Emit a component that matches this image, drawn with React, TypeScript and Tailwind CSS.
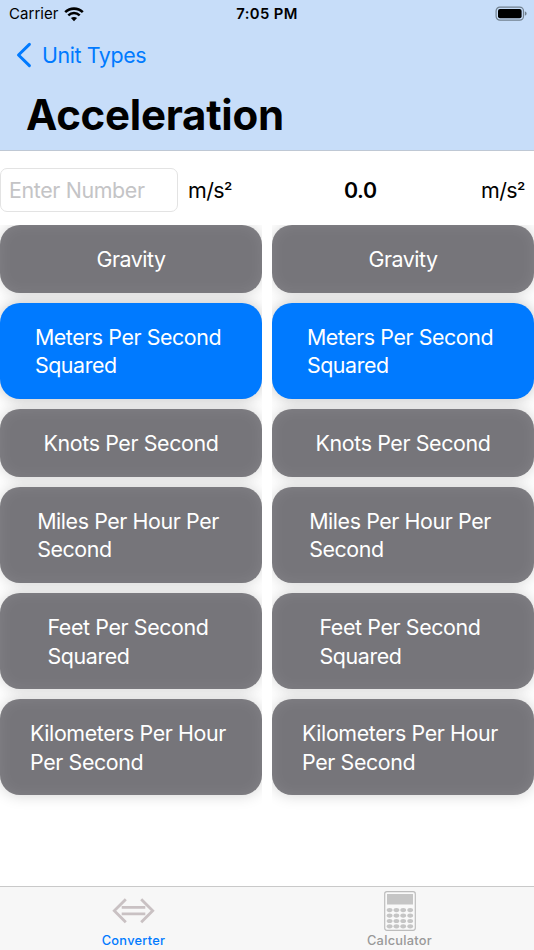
type Unit = { lines: string[]; selected?: boolean; spacing: string };

const units: Unit[] = [
  { lines: ["Gravity"], spacing: "tracking-[-0.45px]" },
  { lines: ["Meters Per Second", "Squared"], selected: true, spacing: "tracking-[-0.43px]" },
  { lines: ["Knots Per Second"], spacing: "tracking-[-0.38px]" },
  { lines: ["Miles Per Hour Per", "Second"], spacing: "tracking-[-0.41px]" },
  { lines: ["Feet Per Second", "Squared"], spacing: "tracking-[-0.38px]" },
  { lines: ["Kilometers Per Hour", "Per Second"], spacing: "tracking-[-0.38px]" },
];

function UnitButton({ lines, selected, spacing }: Unit) {
  const size = lines.length > 1 ? "h-[95.8px] pr-[6px] pt-[1px]" : "h-[67.6px]";
  const look = selected
    ? "bg-[#007aff] shadow-[0_0_15px_rgba(0,0,0,0.24)]"
    : "bg-[#76757a] shadow-[0_0_15px_rgba(0,0,0,0.18),inset_0_0_14px_rgba(255,255,255,0.1)]";
  return (
    <button className={`flex w-full shrink-0 items-center justify-center rounded-[20px] text-left text-[21.4px] leading-[28.4px] text-white ${size} ${look}`}>
      <span className={`whitespace-nowrap ${spacing}`}>
        {lines.map((line) => (
          <span key={line} className="block">{line}</span>
        ))}
      </span>
    </button>
  );
}

function UnitColumn() {
  return (
    <div className="flex h-[661px] w-[262px] flex-col gap-[10.35px] overflow-hidden">
      {units.map((unit) => (
        <UnitButton key={unit.lines[0]} {...unit} />
      ))}
    </div>
  );
}

function UnitSymbol() {
  return (
    <span className="inline-block w-[43px] whitespace-nowrap tracking-[-0.6px]">
      m/s<span className="text-[19px]">²</span>
    </span>
  );
}

function WifiIcon() {
  return (
    <svg width="20" height="15" viewBox="0 0 20 15" className="ml-[5px]" fill="none" stroke="black">
      <path d="M1.2 5.1C6.2.4 13.8.4 18.8 5.1" strokeWidth="2.6" />
      <path d="M4.3 8.4C7.6 5.3 12.4 5.3 15.7 8.4" strokeWidth="2.5" />
      <path d="M6.9 11.1C8.7 9.5 11.3 9.5 13.1 11.1L10 14.2Z" fill="black" stroke="none" />
    </svg>
  );
}

function BatteryIcon() {
  return (
    <svg width="32" height="16" viewBox="0 0 32 16" fill="none">
      <rect x="1.1" y="1.1" width="27.4" height="13" rx="3.8" stroke="#71808f" strokeWidth="1.2" />
      <rect x="3" y="3" width="23.6" height="9.2" rx="2" fill="black" />
      <path d="M29.9 5.4c1.1.4 1.7 1.1 1.7 2.2s-.6 1.8-1.7 2.2z" fill="#71808f" />
    </svg>
  );
}

function ConverterIcon() {
  return (
    <svg width="44" height="26" viewBox="0 0 44 26" fill="none" stroke="#c9c1c3" strokeWidth="2.8">
      <path d="M13.8 1.2 2.3 12.7 13.8 24.2M29.2 1.2 40.7 12.7 29.2 24.2M9.7 9.3H33.3M9.7 15.8H33.3" />
    </svg>
  );
}

function CalculatorIcon() {
  return (
    <svg width="32" height="40" viewBox="0 0 32 40">
      <rect x=".7" y=".7" width="30.6" height="38.6" rx="2.2" fill="#f9f9f9" stroke="#bdbdbd" strokeWidth="1.2" />
      <rect x="3" y="3" width="26" height="10.5" fill="#c5c5c5" />
      {[19.1, 24.6, 30, 35.3].map((y) =>
        [5.6, 12.4, 19.2, 26.2].map((x) => (
          <ellipse key={`${x}-${y}`} cx={x} cy={y} rx="2.9" ry="2.1" fill="#c5c5c5" />
        ))
      )}
    </svg>
  );
}

export default function App() {
  return (
    <div className="flex h-[950px] w-[534px] flex-col overflow-hidden bg-white font-['Inter','Liberation_Sans',sans-serif] text-black">
      <header className="h-[151px] shrink-0 border-b border-[#bfc8d4] bg-[#c7ddf9]">
        <div className="grid h-[28px] grid-cols-3 items-center pl-[9px] pr-[7px]">
          <div className="flex items-center text-[15px] tracking-[0.05px]">
            <span>Carrier</span>
            <WifiIcon />
          </div>
          <div className="pr-[2px] text-center text-[14.8px] font-semibold tracking-[0.4px]">7:05 PM</div>
          <div className="flex justify-end"><BatteryIcon /></div>
        </div>
        <button className="flex h-[54px] items-center pl-[16px] text-[21.4px] text-[#007aff]">
          <svg width="17" height="26" viewBox="0 0 17 26" fill="none" stroke="currentColor" strokeWidth="3" strokeLinecap="round" strokeLinejoin="round">
            <path d="M13.4 2.4 2.5 13 13.4 23.6" />
          </svg>
          <span className="ml-[9px] tracking-[-0.4px]">Unit Types</span>
        </button>
        <h1 className="pl-[26px] text-[42px] font-bold leading-[65px] tracking-[-0.25px]">Acceleration</h1>
      </header>

      <main className="flex min-h-0 flex-1 flex-col">
        <div className="flex h-[74px] shrink-0 items-center pt-[4px] text-[21.4px]">
          <input
            className="h-[44px] w-[178px] rounded-[7px] border border-[#e3e3e3] bg-white px-[8px] tracking-[-0.36px] placeholder:text-[#c4c4c6]"
            placeholder="Enter Number"
          />
          <span className="ml-[10px]"><UnitSymbol /></span>
          <span className="ml-[113px] font-semibold tracking-[-0.4px]">0.0</span>
          <span className="ml-auto mr-[10px]"><UnitSymbol /></span>
        </div>
        <div className="flex justify-between">
          <UnitColumn />
          <UnitColumn />
        </div>
      </main>

      <nav className="grid h-[64px] shrink-0 grid-cols-2 border-t border-[#c9c9c9] bg-[#f7f7f7] text-[12.8px] font-medium tracking-[0.27px]">
        <button className="flex flex-col items-center text-[#007aff]">
          <span className="flex h-[46px] items-center pt-[2px]"><ConverterIcon /></span>
          <span className="leading-[16px]">Converter</span>
        </button>
        <button className="flex flex-col items-center pr-[2px] text-[#999999]">
          <span className="flex h-[46px] items-center pt-[2px]"><CalculatorIcon /></span>
          <span className="leading-[16px]">Calculator</span>
        </button>
      </nav>
    </div>
  );
}
